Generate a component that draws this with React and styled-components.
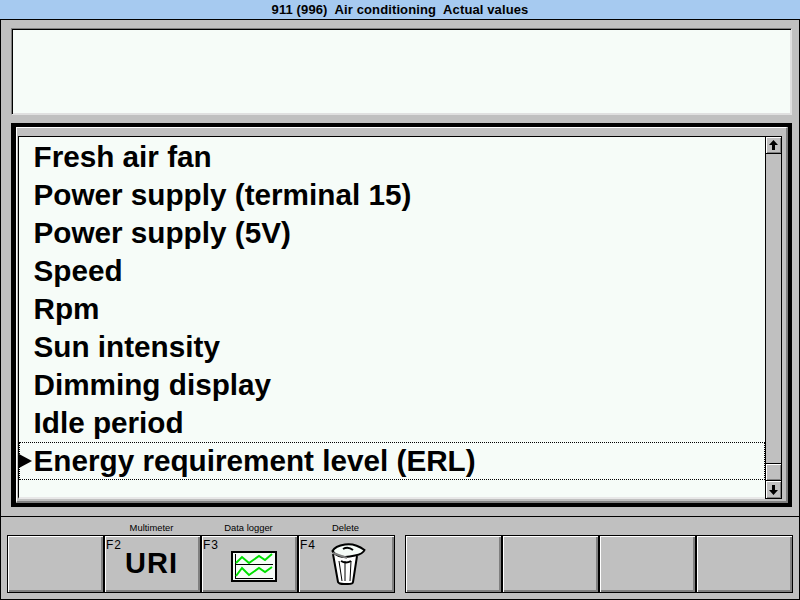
import React from 'react'
import styled, { createGlobalStyle } from 'styled-components'

const GlobalStyle = createGlobalStyle`
  html, body { margin: 0; padding: 0; background: #c0c0c0; }
  body { font-family: "Liberation Sans", Arial, sans-serif; }
`

const Page = styled.div`
  width: 800px;
  height: 600px;
  box-sizing: border-box;
  display: flex;
  flex-direction: column;
  background: #c0c0c0;
  overflow: hidden;
`
const TitleBar = styled.div`
  height: 20px;
  box-sizing: border-box;
  background: #a6caf0;
  border-bottom: 1px solid #000;
  font-size: 13px;
  font-weight: bold;
  letter-spacing: 0.12px;
  line-height: 20px;
  text-align: center;
  white-space: pre;
  color: #000;
`
const Workspace = styled.div`
  height: 496px;
  box-sizing: border-box;
  border-left: 1px solid #000;
  border-right: 1px solid #000;
  padding: 8px 7px 0 10px;
  display: flex;
  flex-direction: column;
  gap: 8px;
`
const MessagePanel = styled.div`
  height: 87px;
  box-sizing: border-box;
  background: #f6fcf8;
  border-top: 1px solid #808080;
  border-left: 1px solid #808080;
  border-right: 1px solid #e0e0e0;
  border-bottom: 1px solid #e0e0e0;
  box-shadow: inset 1px 1px 0 #000, inset -1px -1px 0 #e0e0e0;
`
const ListFrame = styled.div`
  height: 384px;
  box-sizing: border-box;
  border: 4px solid #000;
  border-left-width: 5px;
`
const ListBevel = styled.div`
  height: 100%;
  box-sizing: border-box;
  padding: 8px 4px 2px 1px;
  background: #c0c0c0;
  border-top: 1px solid #fff;
  border-left: 1px solid #fff;
  border-right: 2px solid #808080;
  border-bottom: 2px solid #808080;
`
const ListBox = styled.div`
  height: 100%;
  box-sizing: border-box;
  display: flex;
  background: #f6fcf8;
  border-top: 1px solid #000;
  border-left: 1px solid #000;
  border-bottom: 2px solid #e8e8e8;
`
const Rows = styled.ul`
  flex: 1;
  min-width: 0;
  margin: 0;
  padding: 1px 0 0;
  list-style: none;
`
const Row = styled.li`
  position: relative;
  height: 38px;
  box-sizing: border-box;
  padding-left: 13.5px;
  font-size: 29.7px;
  font-weight: bold;
  line-height: 36px;
  color: #000;
  border: 1px dotted ${p => (p.$selected ? '#000' : 'transparent')};
  white-space: nowrap;
`
const Pointer = styled.span`
  position: absolute;
  left: -1px;
  top: 11px;
  width: 0;
  height: 0;
  border-top: 7px solid transparent;
  border-bottom: 7px solid transparent;
  border-left: 13px solid #000;
`
const ScrollBar = styled.div`
  width: 17px;
  box-sizing: border-box;
  margin-bottom: -2px;
  display: flex;
  flex-direction: column;
  background: #c0c0c0;
  border-left: 1px solid #000;
  border-right: 1px solid #000;
  border-bottom: 1px solid #000;
`
const ScrollTrack = styled.div`
  flex: 1;
`
const ScrollCell = styled.div`
  height: ${p => p.$h}px;
  box-sizing: border-box;
  display: flex;
  align-items: center;
  justify-content: center;
  background: #c0c0c0;
  border-top: ${p => (p.$lined ? '1px solid #000' : '0')};
  border-bottom: ${p => (p.$under ? '1px solid #000' : '0')};
  box-shadow: inset 1px 1px 0 #fff, inset -1px -1px 0 #808080;
`
const Toolbar = styled.div`
  flex: 1;
  box-sizing: border-box;
  border: 1px solid #000;
  padding: 0 6px;
  display: flex;
  gap: 10px;
`
const ButtonGroup = styled.div`
  display: flex;
`
const Slot = styled.div`
  width: 97px;
  display: flex;
  flex-direction: column;
`
const SlotLabel = styled.div`
  height: 18px;
  padding: 6px 2px 0 0;
  box-sizing: border-box;
  font-size: 9.4px;
  line-height: 10px;
  text-align: center;
  color: #000;
`
const FnButton = styled.div`
  position: relative;
  height: 58px;
  box-sizing: border-box;
  display: flex;
  align-items: center;
  justify-content: center;
  background: #c0c0c0;
  border: 1px solid #000;
  box-shadow: inset 1px 1px 0 #fff, inset -2px -2px 0 #808080;
`
const FnKey = styled.span`
  position: absolute;
  left: 1px;
  top: 2px;
  font-size: 12px;
  line-height: 14px;
  letter-spacing: 1px;
  color: #000;
`
const UriText = styled.span`
  font-size: 29px;
  font-weight: bold;
  letter-spacing: 1px;
  line-height: 29px;
  margin: -1px 0 0 -2px;
  color: #000;
`
const ChartIcon = styled.svg`
  display: block;
  margin: 5px 0 0 8px;
`
const TrashIcon = styled.svg`
  display: block;
  margin: -1px 0 0 4px;
`

const items = [
  'Fresh air fan',
  'Power supply (terminal 15)',
  'Power supply (5V)',
  'Speed',
  'Rpm',
  'Sun intensity',
  'Dimming display',
  'Idle period',
  'Energy requirement level (ERL)',
]

const Chart = () => (
  <ChartIcon width="46" height="31" viewBox="0 0 46 31">
    <rect x="1" y="1" width="44" height="29" fill="#f6fcf8" stroke="#000" strokeWidth="2" />
    <path d="M4.5 3v25M4 13.5h38M4 27.5h38" stroke="#000" fill="none" />
    <path d="M5 12l6-6 7 6 10-7 6 4 7-6" stroke="#00e000" strokeWidth="2" fill="none" />
    <path d="M5 25l6-8 7 7 10-7 6 4 7-5" stroke="#00e000" strokeWidth="2" fill="none" />
  </ChartIcon>
)

const Trash = () => (
  <TrashIcon width="35" height="42" viewBox="0 0 35 42">
    <path d="M2 11L7 39q1 2 6 2h4q5 0 5-2L26 13" fill="#fff" stroke="#000" strokeWidth="2" />
    <path d="M8 18l3 20M14 18v20M20 18l-1 20" stroke="#000" fill="none" />
    <path d="M1.5 8Q4 3 14 1.5 24 0 33.5 7 32 11 24 12.5 14 15 8 13 3 11 1.5 8z" fill="#f6fcf8" stroke="#000" strokeWidth="2" />
    <path d="M12 6q5-3 10 1" stroke="#000" strokeWidth="2" fill="none" />
    <path d="M2 10l14 5" stroke="#808080" strokeWidth="2" fill="none" />
    <path d="M10 18q5 3 10 0" stroke="#000" strokeWidth="2" fill="none" />
  </TrashIcon>
)

const Arrow = ({ down }) => (
  <svg width="9" height="10" viewBox="0 0 9 10">
    <path d={down ? 'M3 0h3v5h3L4.5 10 0 5h3z' : 'M4.5 0L9 5H6v5H3V5H0z'} fill="#000" />
  </svg>
)

const buttons = [
  [
    {},
    { label: 'Multimeter', key: 'F2', body: <UriText>URI</UriText> },
    { label: 'Data logger', key: 'F3', body: <Chart /> },
    { label: 'Delete', key: 'F4', body: <Trash /> },
  ],
  [{}, {}, {}, {}],
]

export default function App() {
  return (
    <Page>
      <GlobalStyle />
      <TitleBar>911 (996)  Air conditioning  Actual values</TitleBar>
      <Workspace>
        <MessagePanel />
        <ListFrame>
          <ListBevel>
            <ListBox>
              <Rows>
                {items.map((item, i) => (
                  <Row key={item} $selected={i === items.length - 1}>
                    {i === items.length - 1 && <Pointer />}
                    {item}
                  </Row>
                ))}
              </Rows>
              <ScrollBar>
                <ScrollCell $h={17} $under><Arrow /></ScrollCell>
                <ScrollTrack />
                <ScrollCell $h={17} $lined />
                <ScrollCell $h={18} $lined><Arrow down /></ScrollCell>
              </ScrollBar>
            </ListBox>
          </ListBevel>
        </ListFrame>
      </Workspace>
      <Toolbar>
        {buttons.map((group, g) => (
          <ButtonGroup key={g}>
            {group.map((b, i) => (
              <Slot key={i}>
                <SlotLabel>{b.label}</SlotLabel>
                <FnButton>
                  {b.key && <FnKey>{b.key}</FnKey>}
                  {b.body}
                </FnButton>
              </Slot>
            ))}
          </ButtonGroup>
        ))}
      </Toolbar>
    </Page>
  )
}
